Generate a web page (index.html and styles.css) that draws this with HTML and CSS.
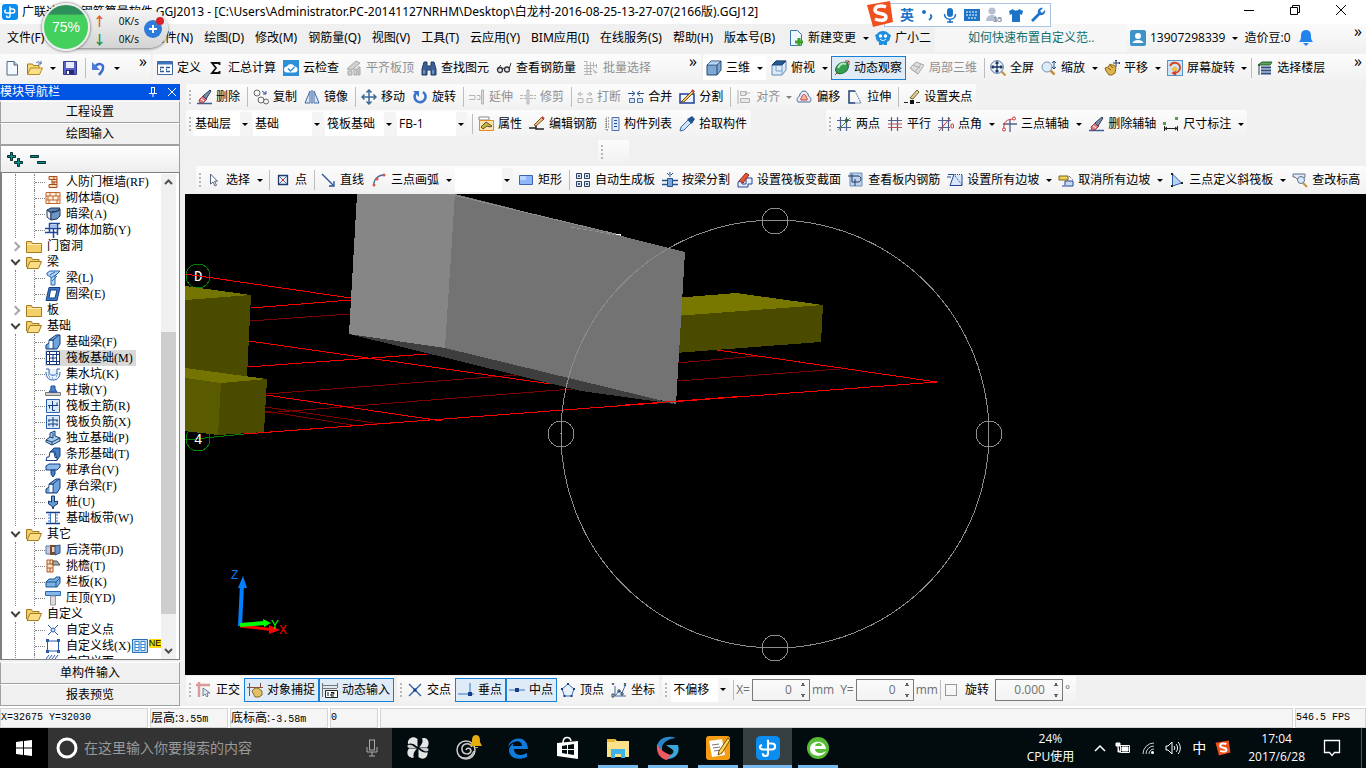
FILE: index.html
```html
<!DOCTYPE html>
<html lang="zh-CN">
<head>
    <meta charset="UTF-8">
    <meta name="viewport" content="width=device-width, initial-scale=1.0">
    <title>GGJ2013</title>
    <link rel="stylesheet" href="styles.css">
</head>
<body>
<svg class="defs" aria-hidden="true">
    <!-- app + files -->
    <symbol id="app" viewBox="0 0 16 16"><rect width="16" height="16" rx="3" fill="#0b8df0"/><path d="M8 2.500v9c0 2.500-3.500 2.500-3.500 0M8 5h2.500c3 0 3 4 0 4H5C2 9 2 6.500 4 6" fill="none" stroke="#fff" stroke-width="1.400"/></symbol>
    <symbol id="new" viewBox="0 0 16 16"><path d="M3 1.500h7l3.500 3.500v10H3z" fill="#f4f9ff" stroke="#4a6684"/><path d="M10 1.500V5h3.500" fill="#b8cbe0" stroke="#4a6684"/></symbol>
    <symbol id="open" viewBox="0 0 16 16"><path d="M.5 14V4h5l1 1.500H12V8" fill="#f7d978" stroke="#a67a1a"/><path d="M.5 14.500L3.500 8H15.500l-3 6.500z" fill="#fbe08b" stroke="#b58a24"/><path d="M9 3c2-2 4-1 5 1m0-3v3h-3" fill="none" stroke="#3e6a9c"/></symbol>
    <symbol id="save" viewBox="0 0 16 16"><path d="M1.500 1.500h13v13h-13z" fill="#5660c8" stroke="#343a90"/><path d="M4 2h8v6H4z" fill="#e9edfb"/><path d="M4 10h8v4H4z" fill="#22286c"/><path d="M5 11h2v3H5z" fill="#fff"/></symbol>
    <symbol id="undo" viewBox="0 0 16 16"><path d="M4 7c3-5 9-3 8 1 0 3-2 4-4 7" fill="none" stroke="#3a6cc8" stroke-width="2.500"/><path d="M1 2v8h8z" fill="#4a7cd8"/></symbol>
    <symbol id="define" viewBox="0 0 16 16"><path d="M.5 1.500h15v13H.5z" fill="#fff" stroke="#3b6aa5"/><path d="M1 2h14v2.500H1z" fill="#3f74b8"/><path d="M3 7.500h4m-4 4h4m2-4h4m-4 4h4M3 9.500h1m5 0h1" stroke="#30598f" stroke-width="1.500"/></symbol>
    <symbol id="sigma" viewBox="0 0 16 16"><path d="M11.500 5V3H4l4 5-4 5h7.500v-2" fill="none" stroke="#111" stroke-width="1.800"/></symbol>
    <symbol id="cloud" viewBox="0 0 16 16"><rect width="16" height="16" fill="#2d8fd8"/><path d="M4 12.500a3 3 0 010-6 4 4 0 017.500 0 3 3 0 010 6z" fill="#fff"/><path d="M5 8.500l2.500 2.500 4-4" fill="none" stroke="#2d8fd8" stroke-width="1.500"/></symbol>
    <symbol id="level" viewBox="0 0 16 16"><path d="M1 9l9-8 4 2-8 7zM2 11h4v4H2zm6-2h3v6H8zm4-2h2v8h-2z" fill="#d0d0d0" stroke="#a8a8a8"/></symbol>
    <symbol id="find" viewBox="0 0 16 16"><path d="M3 2h3v4h4V2h3l2 7v6h-5v-5H6v5H1V9z" fill="#3a5f94" stroke="#203c66"/><path d="M3 10v4m9-4v4" stroke="#9fc0e8"/></symbol>
    <symbol id="glasses" viewBox="0 0 16 16"><circle cx="4" cy="10" r="2.500" fill="#dfe6ee" stroke="#333" stroke-width="1.300"/><circle cx="11" cy="9.500" r="2.500" fill="#dfe6ee" stroke="#333" stroke-width="1.300"/><path d="M6 9l2-1M1 10l4-5m8 4l2-6" stroke="#333" fill="none"/></symbol>
    <symbol id="batch" viewBox="0 0 16 16"><path d="M1 1.500h3v13M1 5.500h12M1 8.500h8M1 11.500h8M1 14.500h8M7.500 2v13m3-13v6m3-4v4" stroke="#b4b4b4" fill="none"/><path d="M9 8l6 5-3 0 1 3z" fill="#bbb"/></symbol>
    <symbol id="cube" viewBox="0 0 16 16"><path d="M1 5l4-4h10v9l-4 5H1z" fill="#7fa7d4" stroke="#274a75"/><path d="M1 5h10v10m0-10l4-4" fill="none" stroke="#274a75"/><path d="M1.500 4.500L5 1.500h9l-3 3z" fill="#b9d4f1"/></symbol>
    <symbol id="topview" viewBox="0 0 16 16"><path d="M1 5l4-4h10v9l-4 5H1z" fill="#dbe9f8" stroke="#6288b2"/><path d="M1 5l4-4h10l-4 4z" fill="#245a94" stroke="#1a426f"/><path d="M11 5v10M5 5v6h6" fill="none" stroke="#7ca3cb"/></symbol>
    <symbol id="orbit" viewBox="0 0 16 16"><path d="M1 15L15 1M11 1h4v4" stroke="#a0402c" fill="none"/><ellipse cx="8" cy="8" rx="7" ry="5" transform="rotate(-35 8 8)" fill="#35a04e" stroke="#1f6637"/><path d="M4 8c2-4 5-5 8-4" stroke="#b6ecc1" stroke-width="2" fill="none"/></symbol>
    <symbol id="partial" viewBox="0 0 16 16"><path d="M1 8l6-6 8 3-6 9z" fill="#ddd" stroke="#aaa"/><path d="M4 5l7 3m-5 4l6-8M1 8l8 6" stroke="#aaa" fill="none"/></symbol>
    <symbol id="full" viewBox="0 0 16 16"><circle cx="7" cy="7" r="6.300" fill="#edf4fc" stroke="#4c6f9c"/><path d="M7 2v10M2 7h10M5.500 3.500L7 2l1.500 1.500m-3 7L7 12l1.500-1.500M3.500 5.500L2 7l1.500 1.500m7-3L12 7l-1.500 1.500" stroke="#1b355c" stroke-width="1.300" fill="none"/><path d="M11.500 11.500l4 4" stroke="#c49339" stroke-width="2"/></symbol>
    <symbol id="zoom" viewBox="0 0 16 16"><circle cx="6" cy="7" r="5" fill="#dcebfa" stroke="#7a92b0"/><path d="M9.500 10.500l4 4" stroke="#c49339" stroke-width="2.500"/><path d="M13 1v8m-2-6l2-2 2 2m-4 4l2 2 2-2" stroke="#23477b" fill="none"/></symbol>
    <symbol id="pan" viewBox="0 0 16 16"><path d="M1 8l3-1 2-3 2 1 2 0 2 3-1 5-3 2H5l-3-4z" fill="#dfb44d" stroke="#8b6a20"/><path d="M4 8l3 2m-1-5l3 3" stroke="#8b6a20"/><path d="M12 0v7m-3-4h7m-5-2l1-1 1 1m2 1l1 1-1 1" stroke="#233f6c" fill="none"/></symbol>
    <symbol id="rotscreen" viewBox="0 0 16 16"><rect x=".5" y=".5" width="15" height="15" fill="#cfe4f7" stroke="#5b93c5"/><path d="M3 6c2-5 10-4 10 2 0 3-3 5-6 5M9 10l-3 3 3 2" stroke="#d9401f" stroke-width="1.800" fill="none"/><path d="M4 9l4-3 3 3-4 3z" fill="#f2c14c"/></symbol>
    <symbol id="floor" viewBox="0 0 16 16"><path d="M1 5l4-3h10l-2 3z" fill="#5aa35a" stroke="#26602c"/><path d="M4 7.500h10M4 10.500h10M4 13.500h10" stroke="#2c4f86" stroke-width="2"/><path d="M2 6v9M1 6l1-1 1 1" stroke="#345" fill="none"/></symbol>
    <!-- edit row -->
    <symbol id="erase" viewBox="0 0 16 16"><path d="M1 14.500h15" stroke="#3a5f96" stroke-width="1.500"/><path d="M3 11l4-4 4 3-4 4H4z" fill="#e27878" stroke="#8e4256"/><path d="M7 7l7-6 1 1-5 8z" fill="#7b8ea9" stroke="#2d3f5e"/><path d="M5 10l3 2" stroke="#fff"/></symbol>
    <symbol id="copy" viewBox="0 0 16 16"><circle cx="4" cy="4" r="3" fill="none" stroke="#666"/><circle cx="8" cy="11" r="3" fill="none" stroke="#666"/><circle cx="13" cy="12.500" r="2.500" fill="none" stroke="#666"/><path d="M9 2l4 3m0-3v3h-3" stroke="#244f93" fill="none"/></symbol>
    <symbol id="mirror" viewBox="0 0 16 16"><path d="M6 2v12H1zM10 2v12h5z" fill="#dce9fa" stroke="#3a66a8"/><path d="M8 1v14" stroke="#24508f"/></symbol>
    <symbol id="move" viewBox="0 0 16 16"><path d="M8 1v14M1 8h14M5.500 3.500L8 1l2.500 2.500m-5 9L8 15l2.500-2.500M3.500 5.500L1 8l2.500 2.500m9-5L15 8l-2.500 2.500" stroke="#3c6b96" stroke-width="1.500" fill="none"/></symbol>
    <symbol id="rotate" viewBox="0 0 16 16"><path d="M4 4a5.500 5.500 0 107-1" stroke="#3a74cc" stroke-width="2.600" fill="none"/><path d="M1 2h6v6z" fill="#3a74cc"/></symbol>
    <symbol id="extend" viewBox="0 0 16 16"><path d="M0 6.500h6v4H0M8 6.500h3v4H8" fill="none" stroke="#b5b5b5"/><path d="M12.500 1v14h2V1z" fill="#ddd" stroke="#b5b5b5"/></symbol>
    <symbol id="trim" viewBox="0 0 16 16"><path d="M0 6.500h6v3H0m10-3h6m-6 3h6" fill="none" stroke="#b5b5b5" stroke-dasharray="3 1"/><path d="M7 1v14h2V1z" fill="#ddd" stroke="#b5b5b5"/></symbol>
    <symbol id="break" viewBox="0 0 16 16"><path d="M1 9.500h5v4H1zM10 9.500h5v4h-5zM1 5h5M4 3L1 5l3 2m6-2h5m-3-2l3 2-3 2" fill="none" stroke="#b5b5b5"/></symbol>
    <symbol id="merge" viewBox="0 0 16 16"><path d="M1.500 9.500h5v4h-5zm8 0h5v4h-5z" fill="#dbe7f6" stroke="#4a6f9f"/><path d="M0 4.500h6m10 0h-6M4 2l3 2.500L4 7m8-5L9 4.500 12 7" fill="none" stroke="#244f93"/></symbol>
    <symbol id="split" viewBox="0 0 16 16"><path d="M1 5h14v9H1z" fill="#eef4fd" stroke="#1d3f96" stroke-width="1.500"/><path d="M2 13L14 1l1 2L5 13z" fill="#f0cf62" stroke="#7a4a20"/><path d="M13 1l2 2" stroke="#c33" stroke-width="2"/></symbol>
    <symbol id="align" viewBox="0 0 16 16"><path d="M2 1v14M4.500 2.500h5v4h-5zm0 7h9v4h-9z" fill="#e8e8e8" stroke="#b0b0b0"/><path d="M14 4H9m2-2L9 4l2 2" fill="none" stroke="#b0b0b0"/></symbol>
    <symbol id="offset" viewBox="0 0 16 16"><path d="M2 13c-3-4 2-5 2-8 2-4 6-4 8 0 0 3 5 4 2 8z" fill="#e3edf9" stroke="#4b6c97"/><path d="M5 11c-1-2 1-2 1-4 1-2 3-2 4 0 0 2 2 2 1 4z" fill="#f5b3a8" stroke="#c8433a"/></symbol>
    <symbol id="stretch" viewBox="0 0 16 16"><path d="M8 2H2v12h6" fill="none" stroke="#1d3f76" stroke-width="1.500"/><path d="M8 2l6 12H8" fill="none" stroke="#1d3f76" stroke-dasharray="1 1"/></symbol>
    <symbol id="grip" viewBox="0 0 16 16"><path d="M0 13.500h4m8 0h4" stroke="#222"/><path d="M6 11h4v4H6z" fill="#111"/><path d="M6 9L13 1l2 2-6 7z" fill="#e0cc8c" stroke="#76653a"/></symbol>
    <!-- component row -->
    <symbol id="props" viewBox="0 0 16 16"><path d="M1 1h10v3H1z" fill="#fff" stroke="#888"/><path d="M1.500 4.500h14v10h-14z" fill="#ffe3b8" stroke="#e58a1f"/><path d="M3 11l5-5 6 4-2 1-3-1-4 3z" fill="#c8b54a" stroke="#5d531c"/></symbol>
    <symbol id="editbar" viewBox="0 0 16 16"><path d="M0 12h7m0-3v4h8" stroke="#222" fill="none" stroke-width="1.500"/><path d="M5 9l8-8 2 2-8 7z" fill="#e4be7d" stroke="#84562a"/><path d="M13 1l2 2" stroke="#c33" stroke-width="2"/></symbol>
    <symbol id="list" viewBox="0 0 16 16"><path d="M8 1.500h7v13H8z" fill="#dce9fa" stroke="#4c74a8"/><path d="M10 4.500h3m-3 3h3m-3 3h3" stroke="#244f93"/><path d="M5 2H2v12h3M2 5h3M2 8h3M2 11h3" fill="none" stroke="#555" stroke-dasharray="1 1"/></symbol>
    <symbol id="pick" viewBox="0 0 16 16"><path d="M1 15l1-4 7-7 3 3-7 7z" fill="#cfe3f8" stroke="#3a6ca8"/><path d="M8 3l2-1 3-2 3 3-2 3-1 2z" fill="#21558f"/></symbol>
    <symbol id="twopt" viewBox="0 0 16 16"><path d="M4.500 1v14m6-14v14M1 4.500h14M1 11.500h14" stroke="#51608e" stroke-width="1.200"/><path d="M2 14L14 2" stroke="#3c9c48"/><circle cx="10.500" cy="4.500" r="1.800" fill="#2c6a32"/></symbol>
    <symbol id="parallel" viewBox="0 0 16 16"><path d="M4.500 1v14m6-14v14M1 4.500h14" stroke="#51608e" stroke-width="1.200"/><path d="M1 8h14M1 11.500h14" stroke="#b4525e"/></symbol>
    <symbol id="ptangle" viewBox="0 0 16 16"><path d="M4.500 1v14m6-14v14M0 4.500h13M0 11.500h12" stroke="#51608e" stroke-width="1.200"/><path d="M1 15L12 2" stroke="#c33"/><rect x="13" y="8" width="2.500" height="4" rx="1" fill="none" stroke="#c33"/></symbol>
    <symbol id="threept" viewBox="0 0 16 16"><path d="M9 3v13M2 8h14" stroke="#51608e" stroke-width="1.300"/><path d="M3 13C2 6 6 3 13 3" fill="none" stroke="#c33"/><circle cx="13" cy="2.500" r="1.500" fill="#fff" stroke="#c33"/><circle cx="3" cy="13.500" r="1.500" fill="#fff" stroke="#c33"/></symbol>
    <symbol id="dim" viewBox="0 0 16 16"><path d="M1.500 10v5m13-5v5m-13-2.500h13M4 11l-2 1.500L4 14m8-3l2 1.500-2 1.500" fill="none" stroke="#222"/><path d="M0 6h3v3H0zM12 1h3v3h-3z" fill="#4fa04f"/></symbol>
    <!-- draw row -->
    <symbol id="arrow" viewBox="0 0 16 16"><path d="M4.500 2v10l2.500-2 2 4 1.500-.8-2-4h3z" fill="#fff" stroke="#54657d"/></symbol>
    <symbol id="point" viewBox="0 0 16 16"><path d="M3.500 3.500h9v9h-9z" fill="#e8effa" stroke="#243c6c" stroke-width="1.300"/><path d="M4 4l8 8m0-8l-8 8" stroke="#4a6ca8"/><path d="M7 7h2v2H7z" fill="#d22"/></symbol>
    <symbol id="line" viewBox="0 0 16 16"><path d="M2 2l11 11" stroke="#244f93" stroke-width="1.300"/><path d="M14 9v5H9" fill="none" stroke="#244f93" stroke-width="1.300"/></symbol>
    <symbol id="arc" viewBox="0 0 16 16"><path d="M3 14C2 8 7 3 13 3" fill="none" stroke="#3f6c9c" stroke-width="1.300"/><circle cx="13" cy="3" r="1.500" fill="#d05a42"/><circle cx="6" cy="7" r="1.500" fill="#d05a42"/><circle cx="3" cy="13" r="1.500" fill="#d05a42"/></symbol>
    <symbol id="rect" viewBox="0 0 16 16"><path d="M1.500 3.500h13v9h-13z" fill="#8fb6fa" stroke="#3c64b4"/><path d="M2 4h6v4H2z" fill="#bcd4ff"/></symbol>
    <symbol id="auto" viewBox="0 0 16 16"><path d="M1.500 1.500h5v5h-5zm8 0h5v5h-5zm-8 8h5v5h-5zm8 0h5v5h-5z" fill="#dde6f3" stroke="#2e3f5c"/><path d="M3 3h2v2H3zm8 0h2v2h-2zm-8 8h2v2H3zm8 0h2v2h-2z" fill="#3f5f92"/></symbol>
    <symbol id="beamsplit" viewBox="0 0 16 16"><path d="M0 8.500h16M0 12.500h16" stroke="#24508f" stroke-width="1.300"/><path d="M5.500 6.500h5v8h-5z" fill="#79a7dd" stroke="#24508f"/><path d="M8 0v5M5 1l2 2m4-2L9 3" stroke="#24508f"/></symbol>
    <symbol id="section" viewBox="0 0 16 16"><path d="M1 15V10l4-3v5h4V6h6v6h-4v3z" fill="#e7f0fb" stroke="#24449a"/><path d="M2 9l7-8 3 2-6 8z" fill="#e4573d" stroke="#8c2d1c"/></symbol>
    <symbol id="viewbar" viewBox="0 0 16 16"><path d="M2 1h12v13H2z" fill="#bdd1ea" stroke="#6d8fba"/><path d="M0 4h10c4 0 4 6 0 6H4V2m3 12V7" fill="none" stroke="#1e3b6a"/></symbol>
    <symbol id="slope" viewBox="0 0 16 16"><path d="M1 2.500h6L3 13.500h12V3" fill="#d8e6f8" stroke="#24449a"/><path d="M7 2.500L15 13M8 2.500h7" stroke="#24449a" fill="none" stroke-dasharray="1 1"/><path d="M0 5h4" stroke="#24449a"/></symbol>
    <symbol id="unslope" viewBox="0 0 16 16"><path d="M7 13V9h8v5H4" fill="#c9dcf5" stroke="#24449a"/><path d="M1 4h9v4H1z" fill="#f0d05a" stroke="#7d6619"/><path d="M11 4l4 4" stroke="#24449a" stroke-dasharray="1 1"/></symbol>
    <symbol id="tri" viewBox="0 0 16 16"><path d="M3.500 2l9 9-9 3z" fill="#bcd4f2" stroke="#2c5ca5"/><path d="M2 1h2v2H2zm0 12h2v2H2zM12 10h2v2h-2z" fill="#222"/></symbol>
    <symbol id="checkelev" viewBox="0 0 16 16"><path d="M1 2h12v3L8 10 3 5H1z" fill="#e3ebf5" stroke="#5b728f"/><circle cx="9" cy="8" r="3.500" fill="#dbeafa" stroke="#5b728f"/><path d="M11 11l4 4" stroke="#c49339" stroke-width="2"/></symbol>
    <!-- snap row -->
    <symbol id="ortho" viewBox="0 0 16 16"><path d="M0 3h14M3 0v15" stroke="#dc9a9a" stroke-width="2.500"/><path d="M7 6v8l2-2 2 3 1-1-1-3h3z" fill="#dce7f2" stroke="#6b8096"/></symbol>
    <symbol id="osnap" viewBox="0 0 16 16"><path d="M0 5.500h16M2.500 1v13m11-13v5" stroke="#8a4b3f"/><path d="M5 9l3-3h3l4 3v4l-3 2H8z" fill="#e3bf66" stroke="#8b6a20"/></symbol>
    <symbol id="dyn" viewBox="0 0 16 16"><path d="M.5 1v14M15.500 1v5M1 3.500h14M1 6.500h14" stroke="#777" fill="none"/><path d="M3.500 8.500h12v7h-12z" fill="#fff" stroke="#222"/><path d="M6 10v4m3-3.500h3v1.500H9v2h3" stroke="#111" fill="none"/></symbol>
    <symbol id="cross" viewBox="0 0 16 16"><path d="M2 2l12 12M14 2L2 14" stroke="#2a5caa" stroke-width="1.300"/><path d="M6.500 6.500h3v3h-3z" fill="#143f86"/></symbol>
    <symbol id="perp" viewBox="0 0 16 16"><path d="M0 12h16M12 1v11" stroke="#6d9ad4" stroke-width="1.500"/><path d="M10 10h4v4h-4z" fill="#143f86"/></symbol>
    <symbol id="mid" viewBox="0 0 16 16"><path d="M0 8h16" stroke="#6d9ad4" stroke-width="1.500"/><path d="M6 6h4v4H6z" fill="#143f86"/></symbol>
    <symbol id="vertex" viewBox="0 0 16 16"><path d="M8 2l6 5-2.500 7h-7L2 7z" fill="#e8f0fb" stroke="#3a6cb0"/><path d="M7 1h2v2H7zM1 6h2v2H1zm12 0h2v2h-2zM3.500 13h2v2h-2zm7 0h2v2h-2z" fill="#143f86"/></symbol>
    <symbol id="coord" viewBox="0 0 16 16"><path d="M4 4v10h11M4 14l4-5 3 2 3-7" fill="none" stroke="#3a6cb0"/><path d="M1 1l1 2 1-2m10 0l2 3m0-3l-2 3M1 12h2v3H1zM7 8h2v2H7zm3 3h2v2h-2z" fill="none" stroke="#345"/></symbol>
    <!-- tree -->
    <symbol id="folder" viewBox="0 0 16 16"><path d="M.5 3.500h5l1 2h9v9H.5z" fill="#f3cf68" stroke="#a57a20"/><path d="M1 6.500h14" stroke="#fff0b8"/></symbol>
    <symbol id="folder-open" viewBox="0 0 16 16"><path d="M.5 13V3.500h5l1 2H13V8" fill="#f3cf68" stroke="#a57a20"/><path d="M1 14.500L4 7.500h11.500l-3 7z" fill="#fbdd84" stroke="#a57a20"/></symbol>
    <symbol id="t-frame" viewBox="0 0 16 16"><path d="M4 2.500h8v11H4v-3h3v-5H4z" fill="#f8dcc0" stroke="#a84d18"/><path d="M7 5.500h5M7 8h5m-5 2.500h5m-3-8v3m0 2v3" stroke="#a84d18"/></symbol>
    <symbol id="t-brick" viewBox="0 0 16 16"><path d="M1 2.500h14v11H1z" fill="#fff3e6" stroke="#c2662a"/><path d="M1 6h14M1 10h14M5 2v4m6-4v4M8 6v4m-4 0v4m8-4v4M3 6v4m10-4v4" stroke="#c2662a"/></symbol>
    <symbol id="t-box" viewBox="0 0 16 16"><path d="M2 4l4-2h9l-2 3-8 1z" fill="#5d82b4" stroke="#1d355c"/><path d="M2 4l4 3v7l-4-3z" fill="#e9f1fa" stroke="#1d355c"/><path d="M6 7l7-2 2-2v7l-3 3-6 1z" fill="#7096c6" stroke="#1d355c"/></symbol>
    <symbol id="t-rebar" viewBox="0 0 16 16"><path d="M4 1.500h11M4.500 1v10M0 6.500h16M0 10.500h13M8.500 4v12M12.500 1v12" stroke="#1f4796" stroke-width="1.500" fill="none"/><path d="M5 3h7v3H5z" fill="#9dbdec"/></symbol>
    <symbol id="t-beam" viewBox="0 0 16 16"><path d="M2 3l3-2h10l-3 3-2 2v9H6V7L2 5z" fill="#b7d4f4" stroke="#2668b5"/><path d="M5 5l5-3M6 8l6-4M7 11l5-5" stroke="#2668b5"/></symbol>
    <symbol id="t-ring" viewBox="0 0 16 16"><path d="M4 1.500h11L12 14.500H1z" fill="#3f79c4" stroke="#123e86"/><path d="M5.500 4H12l-2 8H4z" fill="#fff" stroke="#123e86"/></symbol>
    <symbol id="t-found" viewBox="0 0 16 16"><path d="M1 15v-4l3-2V6l7-5h4v9l-3 5z" fill="#6fa4df" stroke="#163c78"/><path d="M4 6h4v9M8 6l6-5" stroke="#163c78" fill="none"/><path d="M4.500 7h3v7h-3z" fill="#fff"/></symbol>
    <symbol id="t-raft" viewBox="0 0 16 16"><path d="M1.500 1.500h13v13h-13z" fill="#fff" stroke="#12377a"/><path d="M4.500 1v14m7-14v14M1 4.500h14M1 11.500h14M8 4v8M4 8h8" stroke="#12377a"/></symbol>
    <symbol id="t-sump" viewBox="0 0 16 16"><path d="M1 3h3v4c1 3 7 3 8 0V3h3M1 6c0 5 2 8 7 8s7-3 7-8" fill="#e9f1fb" stroke="#2a62b5"/><path d="M3 9h1m0 2h1m2 1h1m3-2h1m0-2h1" stroke="#2a62b5"/></symbol>
    <symbol id="t-pier" viewBox="0 0 16 16"><path d="M.5 10.500h15v3H.5z" fill="#d0d0d0" stroke="#777"/><path d="M4 10l2-3V4h4v3l2 3z" fill="#4c84cf" stroke="#1d4d93"/></symbol>
    <symbol id="t-main" viewBox="0 0 16 16"><path d="M1.500 1.500h13v13h-13z" fill="#dce9fb" stroke="#2a62b5"/><path d="M7.500 3v9.500H10M3 7.500h10M4.500 7.500v3m7.500-3v-3" stroke="#143f86" fill="none"/></symbol>
    <symbol id="t-neg" viewBox="0 0 16 16"><path d="M1.500 1.500h13v13h-13z" fill="#dce9fb" stroke="#2a62b5"/><path d="M8 3v10M3 6h10M3 10h10M4 6v2m8-2v2m-8 2v2m8-2v2" stroke="#143f86" fill="none"/></symbol>
    <symbol id="t-iso" viewBox="0 0 16 16"><path d="M1 10l4-3V3l5-2v5l5 2v3l-8 4-6-3z" fill="#a9cbee" stroke="#143f74"/><path d="M1 10l6 2 8-4M7 12v3M5 7l3 1V3" stroke="#143f74" fill="none"/></symbol>
    <symbol id="t-strip" viewBox="0 0 16 16"><path d="M5 6l4-4h6v8l-3 4-2-8z" fill="#4680c4" stroke="#143f86"/><path d="M1 14.500h11v-3h-2L9 6H5l-1 5H2z" fill="#fff" stroke="#143f86"/></symbol>
    <symbol id="t-cap" viewBox="0 0 16 16"><path d="M1 4l3-2h11v3l-3 3H1z" fill="#8db8ea" stroke="#143f86"/><path d="M6 8h4v4l-2 3-2-3z" fill="#4680c4" stroke="#143f86"/></symbol>
    <symbol id="t-pile" viewBox="0 0 16 16"><path d="M6.500 2h3v6l3-1v3L9 12l-1 3-1-3-3.500-2V7l3 1z" fill="#6a9bd6" stroke="#143f74"/></symbol>
    <symbol id="t-band" viewBox="0 0 16 16"><path d="M1 2.500h14M1 13.500h14" stroke="#143f86" stroke-width="1.500"/><path d="M5.500 3v10m5-10v10M3 5h2m-2 3h2m-2 3h2m6-6h2m-2 3h2m-2 3h2" stroke="#3a74c4"/></symbol>
    <symbol id="t-post" viewBox="0 0 16 16"><path d="M1 4h5v8H1z" fill="#b9cdea" stroke="#5d7ba6"/><path d="M5 3h6v10H5z" fill="#7a4a2c"/><path d="M7 5h3v5H7z" fill="#f1d5b6"/><path d="M10 4l5-1v8l-5 2z" fill="#6b93cc" stroke="#2c538e"/></symbol>
    <symbol id="t-eave" viewBox="0 0 16 16"><path d="M2 2h6v12H2z" fill="#fbe3cc" stroke="#b5541c"/><path d="M2 6h6M2 10h6M5 2v4m0 4v4" stroke="#b5541c"/><path d="M8 3h4l3 4H8z" fill="#aaa" stroke="#555"/></symbol>
    <symbol id="t-rail" viewBox="0 0 16 16"><path d="M1 8l3-3h6l1-2h4v6l-3 4H1z" fill="#7db0e2" stroke="#1b5592"/><path d="M1 8h10l4-4M11 8v5" stroke="#1b5592" fill="none"/></symbol>
    <symbol id="t-top" viewBox="0 0 16 16"><path d="M.5 1.500h15v4H.5z" fill="#84b7ea" stroke="#276db3"/><path d="M5.500 6h5v9h-5z" fill="#ddd" stroke="#999"/></symbol>
    <symbol id="t-x" viewBox="0 0 16 16"><path d="M3 3l10 10M13 3L3 13" stroke="#2a5caa"/><circle cx="8" cy="8" r="2" fill="#cfe0f8" stroke="#2a5caa"/></symbol>
    <symbol id="t-poly" viewBox="0 0 16 16"><path d="M2.500 3h11v10h-11z" fill="#fff" stroke="#2a5caa"/><path d="M1 1h3v3H1zm11 0h3v3h-3zM1 12h3v3H1zm11 0h3v3h-3z" fill="#2a5caa"/></symbol>
    <symbol id="t-hatch" viewBox="0 0 16 16"><path d="M1 5l3-4m0 4l3-4m0 4l3-4m0 4l3-4" stroke="#2a5caa"/></symbol>
    <symbol id="sogou" viewBox="0 0 28 26"><path d="M1 4L24 0l3 21-20 5z" fill="#f0501e"/><path d="M20 6c-5-2-11-1-11 3 0 5 11 2 11 7 0 4-6 4-11 2" fill="none" stroke="#fff" stroke-width="3.500"/></symbol>
</svg>

<header class="titlebar">
    <svg class="ic"><use href="#app"/></svg>
    <span class="title">广联达BIM钢筋算量软件 GGJ2013 - [C:\Users\Administrator.PC-20141127NRHM\Desktop\白龙村-2016-08-25-13-27-07(2166版).GGJ12]</span>
    <div class="winbtns">
        <button aria-label="最小化"><svg width="12" height="12"><path d="M1 6.500h10" stroke="#000"/></svg></button>
        <button aria-label="还原"><svg width="12" height="12"><path d="M1.500 3.500h7v7h-7zM3.500 3V1.500h7v7H9" fill="none" stroke="#000"/></svg></button>
        <button aria-label="关闭"><svg width="12" height="12"><path d="M1 1l10 10M11 1L1 11" stroke="#000"/></svg></button>
    </div>
</header>

<nav class="menubar">
    <div class="menus">
        <a href="#">文件(F)</a><a href="#">编辑(E)</a><a href="#">楼层(L)</a><a href="#">构件(N)</a><a href="#">绘图(D)</a><a href="#">修改(M)</a><a href="#">钢筋量(Q)</a><a href="#">视图(V)</a><a href="#">工具(T)</a><a href="#">云应用(Y)</a><a href="#">BIM应用(I)</a><a href="#">在线服务(S)</a><a href="#">帮助(H)</a><a href="#">版本号(B)</a>
    </div>
    <button class="tb"><svg class="ic" viewBox="0 0 16 16"><path d="M2.500.5h7l4 4v11h-11z" fill="#eef6ff" stroke="#3f76b0"/><path d="M11 8v8M7 12h8" stroke="#3fa02c" stroke-width="3"/></svg>新建变更</button><i class="caret"></i>
    <button class="tb"><svg class="ic" viewBox="0 0 16 16"><path d="M0 5l2-1c2-4 10-4 12 0l2 1-1 3c0 2-1 3-3 4v3h-3l-1-1-1 1H4v-3C2 11 1 10 1 8z" fill="#1d8fe0"/><circle cx="5.500" cy="6" r="1.700" fill="#fff"/><circle cx="10.500" cy="6" r="1.700" fill="#fff"/><path d="M5 9c2 2 4 2 6 0" stroke="#fff" fill="none"/></svg>广小二</button>
    <a href="#" class="tip">如何快速布置自定义范..</a>
    <div class="account">
        <button class="tb"><svg class="ic" viewBox="0 0 16 16"><rect width="16" height="16" rx="2" fill="#3f93c8"/><circle cx="8" cy="6" r="3" fill="#fff"/><path d="M2.500 13c1-4 10-4 11 0z" fill="#fff"/></svg>13907298339</button><i class="caret"></i>
        <button class="tb">造价豆:0</button>
        <button class="tb" aria-label="消息"><svg class="ic" viewBox="0 0 16 16"><path d="M8 0c5 0 5 4 5 7 0 2 1 4 2 5H1c1-1 2-3 2-5 0-3 0-7 5-7zM5 13h6l-3 3z" fill="#2383ea"/></svg></button>
        <span class="more">»</span>
    </div>
</nav>

<div class="toolbar">
    <div class="seg files">
        <button class="tb" aria-label="新建"><svg class="ic"><use href="#new"/></svg></button>
        <button class="tb" aria-label="打开"><svg class="ic"><use href="#open"/></svg></button><i class="caret"></i>
        <button class="tb" aria-label="保存"><svg class="ic"><use href="#save"/></svg></button><i class="sep"></i>
        <button class="tb" aria-label="撤销"><svg class="ic"><use href="#undo"/></svg></button><i class="caret"></i>
        <span class="more">»</span>
    </div>
    <div class="seg calc">
        <button class="tb"><svg class="ic"><use href="#define"/></svg>定义</button>
        <button class="tb"><svg class="ic"><use href="#sigma"/></svg>汇总计算</button>
        <button class="tb"><svg class="ic"><use href="#cloud"/></svg>云检查</button>
        <button class="tb off"><svg class="ic"><use href="#level"/></svg>平齐板顶</button>
        <button class="tb"><svg class="ic"><use href="#find"/></svg>查找图元</button>
        <button class="tb"><svg class="ic"><use href="#glasses"/></svg>查看钢筋量</button>
        <button class="tb off"><svg class="ic"><use href="#batch"/></svg>批量选择</button>
        <span class="more">»</span>
    </div>
    <div class="seg views">
        <span class="white"><button class="tb"><svg class="ic"><use href="#cube"/></svg>三维</button><i class="caret"></i></span>
        <button class="tb"><svg class="ic"><use href="#topview"/></svg>俯视</button><i class="caret"></i>
        <button class="tb on"><svg class="ic"><use href="#orbit"/></svg>动态观察</button>
        <button class="tb off"><svg class="ic"><use href="#partial"/></svg>局部三维</button><i class="sep"></i>
        <button class="tb"><svg class="ic"><use href="#full"/></svg>全屏</button>
        <button class="tb"><svg class="ic"><use href="#zoom"/></svg>缩放</button><i class="caret"></i>
        <button class="tb"><svg class="ic"><use href="#pan"/></svg>平移</button><i class="caret"></i>
        <button class="tb"><svg class="ic"><use href="#rotscreen"/></svg>屏幕旋转</button><i class="caret tight"></i><i class="sep"></i>
        <button class="tb"><svg class="ic"><use href="#floor"/></svg>选择楼层</button>
        <span class="more">»</span>
    </div>
</div>

<main>
    <aside>
        <div class="navhead"><span>模块导航栏</span>
            <svg width="10" height="10"><path d="M3 .5h4M3.500 1v5M6.500 1v5M1 6.500h8M5 7v3" stroke="#fff" fill="none"/></svg>
            <svg width="10" height="10"><path d="M1 1l8 8M9 1L1 9" stroke="#fff"/></svg>
        </div>
        <button class="navbtn">工程设置</button>
        <button class="navbtn">绘图输入</button>
        <div class="expand">
            <svg width="42" height="20"><path d="M4.500 2.500h2v3h3v2h-3v3h-2v-3h-3v-2h3zM11.500 8.500h2v3h3v2h-3v3h-2v-3h-3v-2h3zM24.500 5.500h8v2h-8zM31.500 11.500h8v2h-8z" fill="#0a9090" stroke="#032f2f"/></svg>
        </div>
        <div class="treebox">
            <ul class="tree">
                <li><ul>
                    <li><svg class="ic"><use href="#t-frame"/></svg>人防门框墙(RF)</li>
                    <li><svg class="ic"><use href="#t-brick"/></svg>砌体墙(Q)</li>
                    <li><svg class="ic"><use href="#t-box"/></svg>暗梁(A)</li>
                    <li><svg class="ic"><use href="#t-rebar"/></svg>砌体加筋(Y)</li>
                </ul></li>
                <li><div class="node shut"><svg class="ic"><use href="#folder"/></svg>门窗洞</div></li>
                <li><div class="node"><svg class="ic"><use href="#folder-open"/></svg>梁</div><ul>
                    <li><svg class="ic"><use href="#t-beam"/></svg>梁(L)</li>
                    <li><svg class="ic"><use href="#t-ring"/></svg>圈梁(E)</li>
                </ul></li>
                <li><div class="node shut"><svg class="ic"><use href="#folder"/></svg>板</div></li>
                <li><div class="node"><svg class="ic"><use href="#folder-open"/></svg>基础</div><ul>
                    <li><svg class="ic"><use href="#t-found"/></svg>基础梁(F)</li>
                    <li class="sel"><svg class="ic"><use href="#t-raft"/></svg><span>筏板基础(M)</span></li>
                    <li><svg class="ic"><use href="#t-sump"/></svg>集水坑(K)</li>
                    <li><svg class="ic"><use href="#t-pier"/></svg>柱墩(Y)</li>
                    <li><svg class="ic"><use href="#t-main"/></svg>筏板主筋(R)</li>
                    <li><svg class="ic"><use href="#t-neg"/></svg>筏板负筋(X)</li>
                    <li><svg class="ic"><use href="#t-iso"/></svg>独立基础(P)</li>
                    <li><svg class="ic"><use href="#t-strip"/></svg>条形基础(T)</li>
                    <li><svg class="ic"><use href="#t-cap"/></svg>桩承台(V)</li>
                    <li><svg class="ic"><use href="#t-found"/></svg>承台梁(F)</li>
                    <li><svg class="ic"><use href="#t-pile"/></svg>桩(U)</li>
                    <li><svg class="ic"><use href="#t-band"/></svg>基础板带(W)</li>
                </ul></li>
                <li><div class="node"><svg class="ic"><use href="#folder-open"/></svg>其它</div><ul>
                    <li><svg class="ic"><use href="#t-post"/></svg>后浇带(JD)</li>
                    <li><svg class="ic"><use href="#t-eave"/></svg>挑檐(T)</li>
                    <li><svg class="ic"><use href="#t-rail"/></svg>栏板(K)</li>
                    <li><svg class="ic"><use href="#t-top"/></svg>压顶(YD)</li>
                </ul></li>
                <li><div class="node"><svg class="ic"><use href="#folder-open"/></svg>自定义</div><ul>
                    <li><svg class="ic"><use href="#t-x"/></svg>自定义点</li>
                    <li><svg class="ic"><use href="#t-poly"/></svg>自定义线(X)<svg class="ic card" viewBox="0 0 16 16"><path d="M.5 1.500h15v13H.5z" fill="#bcdcf8" stroke="#2a6fb5"/><path d="M3 3.500h4v9H3zm6 0h4v9H9zM3 6.500h4m-4 3h4m2-3h4m-4 3h4" fill="#fff" stroke="#3a86cf"/></svg><b class="new">NE</b></li>
                    <li><svg class="ic"><use href="#t-hatch"/></svg>自定义面</li>
                </ul></li>
            </ul>
            <div class="scroll">
                <svg width="15" height="16"><path d="M4 10l3.500-3.500L11 10" fill="none" stroke="#505050" stroke-width="2"/></svg>
                <i class="thumb"></i>
                <svg width="15" height="16"><path d="M4 6l3.500 3.500L11 6" fill="none" stroke="#505050" stroke-width="2"/></svg>
            </div>
        </div>
        <button class="navbtn">单构件输入</button>
        <button class="navbtn">报表预览</button>
    </aside>

    <section class="work">
        <div class="row">
            <div class="seg">
                <i class="dots"></i>
                <button class="tb"><svg class="ic"><use href="#erase"/></svg>删除</button><i class="sep"></i>
                <button class="tb"><svg class="ic"><use href="#copy"/></svg>复制</button>
                <button class="tb"><svg class="ic"><use href="#mirror"/></svg>镜像</button><i class="sep"></i>
                <button class="tb"><svg class="ic"><use href="#move"/></svg>移动</button>
                <button class="tb"><svg class="ic"><use href="#rotate"/></svg>旋转</button><i class="sep"></i>
                <button class="tb off"><svg class="ic"><use href="#extend"/></svg>延伸</button>
                <button class="tb off"><svg class="ic"><use href="#trim"/></svg>修剪</button><i class="sep"></i>
                <button class="tb off"><svg class="ic"><use href="#break"/></svg>打断</button>
                <button class="tb"><svg class="ic"><use href="#merge"/></svg>合并</button>
                <button class="tb"><svg class="ic"><use href="#split"/></svg>分割</button><i class="sep"></i>
                <button class="tb off"><svg class="ic"><use href="#align"/></svg>对齐</button><i class="caret tight dim"></i>
                <button class="tb"><svg class="ic"><use href="#offset"/></svg>偏移</button>
                <button class="tb"><svg class="ic"><use href="#stretch"/></svg>拉伸</button><i class="sep"></i>
                <button class="tb"><svg class="ic"><use href="#grip"/></svg>设置夹点</button>
            </div>
        </div>
        <div class="row">
            <div class="seg">
                <i class="dots"></i>
                <span class="combo short"><select aria-label="楼层"><option>基础层</option></select></span>
                <span class="combo"><select aria-label="类型"><option>基础</option></select></span>
                <span class="combo"><select aria-label="构件类型"><option>筏板基础</option></select></span>
                <span class="combo"><select aria-label="构件"><option>FB-1</option></select></span>
                <i class="sep"></i>
                <button class="tb"><svg class="ic"><use href="#props"/></svg>属性</button>
                <button class="tb"><svg class="ic"><use href="#editbar"/></svg>编辑钢筋</button>
                <button class="tb"><svg class="ic"><use href="#list"/></svg>构件列表</button>
                <button class="tb"><svg class="ic"><use href="#pick"/></svg>拾取构件</button>
            </div>
            <div class="seg axis">
                <i class="dots"></i>
                <button class="tb"><svg class="ic"><use href="#twopt"/></svg>两点</button>
                <button class="tb"><svg class="ic"><use href="#parallel"/></svg>平行</button>
                <button class="tb"><svg class="ic"><use href="#ptangle"/></svg>点角</button><i class="caret"></i>
                <button class="tb"><svg class="ic"><use href="#threept"/></svg>三点辅轴</button><i class="caret"></i>
                <button class="tb"><svg class="ic"><use href="#erase"/></svg>删除辅轴</button>
                <button class="tb"><svg class="ic"><use href="#dim"/></svg>尺寸标注</button><i class="caret"></i>
            </div>
        </div>
        <div class="row">
            <div class="seg stub"><i class="dots"></i></div>
        </div>
        <div class="row">
            <div class="seg draw">
                <i class="dots"></i>
                <button class="tb"><svg class="ic"><use href="#arrow"/></svg>选择</button><i class="caret"></i><i class="sep"></i>
                <button class="tb"><svg class="ic"><use href="#point"/></svg>点</button><i class="sep"></i>
                <button class="tb"><svg class="ic"><use href="#line"/></svg>直线</button>
                <button class="tb"><svg class="ic"><use href="#arc"/></svg>三点画弧</button><i class="caret"></i>
                <span class="combo short"><select aria-label="弧参数"><option></option></select></span>
                <button class="tb"><svg class="ic"><use href="#rect"/></svg>矩形</button><i class="sep"></i>
                <button class="tb"><svg class="ic"><use href="#auto"/></svg>自动生成板</button>
                <button class="tb"><svg class="ic"><use href="#beamsplit"/></svg>按梁分割</button>
                <button class="tb"><svg class="ic"><use href="#section"/></svg>设置筏板变截面</button>
                <button class="tb"><svg class="ic"><use href="#viewbar"/></svg>查看板内钢筋</button>
                <button class="tb"><svg class="ic"><use href="#slope"/></svg>设置所有边坡</button><i class="caret"></i>
                <button class="tb"><svg class="ic"><use href="#unslope"/></svg>取消所有边坡</button><i class="caret"></i>
                <button class="tb"><svg class="ic"><use href="#tri"/></svg>三点定义斜筏板</button><i class="caret"></i>
                <button class="tb"><svg class="ic"><use href="#checkelev"/></svg>查改标高</button>
            </div>
        </div>

        <svg class="view">
            <g shape-rendering="crispEdges" fill="none">
                <path d="M65 127L164 120M81 200L332 181M80 219L387 195M80 213L196 230M80 217L173 232M492 169L572 162M492 187L655 175" stroke="#800000"/>
                <path d="M66 114L166 106M64 147L366 190M62 173L242 160M81 201L257 227M59 240L752 188L532 156" stroke="#f00"/>
                <path d="M0 246L59 240" stroke="#008000"/>
                <circle cx="13" cy="82" r="12" stroke="#008000"/>
                <circle cx="13" cy="245" r="12" stroke="#008000"/>
            </g>
            <text x="9" y="87" class="mark">D</text>
            <text x="9" y="250" class="mark">4</text>
            <g shape-rendering="crispEdges">
                <path d="M0 80L166 104" stroke="#f00"/>
                <path d="M0 92L66 101 0 106z" fill="#747400"/>
                <path d="M0 106L66 101 62 183 0 176z" fill="#4b4b00"/>
                <path d="M0 174L82 185 36 189 0 184z" fill="#747400"/>
                <path d="M0 184L36 189 33 241 0 237z" fill="#5a5a00"/>
                <path d="M36 189L82 185 79 238 33 241z" fill="#4b4b00"/>
                <path d="M490 104L551 99 638 111 490 122z" fill="#787800"/>
                <path d="M490 122L638 111 636 148 490 159z" fill="#4b4b00"/>
                <path d="M164 140L260 153 490 210 396 197z" fill="#3e3e3e"/>
                <path d="M172 0H270L260 154 164 140z" fill="#868686"/>
                <path d="M270 0L500 58 491 210 260 154z" fill="#737373"/>
                <path d="M264 0L435 41" stroke="#8c8c8c"/>
                <path d="M386 33L430 41" stroke="#909090" stroke-dasharray="4 2"/>
                <path d="M431 40h4v2" stroke="#fff" fill="none"/>
                <path d="M440 211L560 202" stroke="#f00"/>
            </g>
            <g fill="none" stroke="#8c8c8c" shape-rendering="crispEdges">
                <circle cx="590" cy="240" r="214"/>
                <circle cx="590" cy="27" r="13"/>
                <circle cx="376" cy="240" r="13"/>
                <circle cx="804" cy="240" r="13"/>
                <circle cx="590" cy="454" r="13"/>
            </g>
            <path d="M55 432L57 390" stroke="#0080ff" stroke-width="4"/>
            <path d="M58 382L62 394H53z" fill="#0080ff"/>
            <path d="M55 432L90 436" stroke="#f00" stroke-width="3"/>
            <path d="M84 431L95 436 84 440z" fill="#f00"/>
            <path d="M55 431L80 429" stroke="#0f0" stroke-width="4"/>
            <path d="M78 425L86 429 79 433z" fill="#0f0"/>
            <text x="46" y="385" class="axis-label" fill="#0080ff">Z</text>
            <text x="86" y="435" class="axis-label" fill="#0f0">Y</text>
            <text x="94" y="440" class="axis-label" fill="#f00">X</text>
        </svg>

        <div class="row snap">
            <div class="seg">
                <i class="dots"></i>
                <button class="tb"><svg class="ic"><use href="#ortho"/></svg>正交</button>
                <button class="tb on"><svg class="ic"><use href="#osnap"/></svg>对象捕捉</button>
                <button class="tb on"><svg class="ic"><use href="#dyn"/></svg>动态输入</button>
            </div>
            <div class="seg">
                <i class="dots"></i>
                <button class="tb"><svg class="ic"><use href="#cross"/></svg>交点</button>
                <button class="tb on"><svg class="ic"><use href="#perp"/></svg>垂点</button>
                <button class="tb on"><svg class="ic"><use href="#mid"/></svg>中点</button>
                <button class="tb"><svg class="ic"><use href="#vertex"/></svg>顶点</button>
                <button class="tb"><svg class="ic"><use href="#coord"/></svg>坐标</button>
            </div>
            <div class="seg offset">
                <i class="dots"></i>
                <span class="combo short"><select aria-label="偏移方式"><option>不偏移</option></select></span>
                <i class="sep"></i>
                <label for="offx">X=</label><span class="spin"><input id="offx" value="0"></span><span>mm</span>
                <label for="offy" class="second">Y=</label><span class="spin"><input id="offy" value="0"></span><span>mm</span>
                <i class="sep"></i>
                <input type="checkbox" id="rot"><label for="rot" class="rot">旋转</label>
                <span class="spin wide"><input aria-label="角度" value="0.000"></span><span>°</span>
            </div>
        </div>
    </section>
</main>

<footer class="status">
    <span class="xy num">X=32675 Y=32030</span>
    <span class="floor">层高:<span class="num">3.55m</span></span>
    <span class="bottom">底标高:<span class="num">-3.58m</span></span>
    <span class="count num">0</span>
    <span class="rest"></span>
    <span class="fps num">546.5 FPS</span>
</footer>

<div class="taskbar">
    <button class="start" aria-label="开始"><svg width="16" height="16"><path d="M0 2l7-1v6.500H0zM8 1l8-1v7.500H8zM0 8.500h7V15l-7-1zM8 8.500h8V16l-8-1z" fill="#fff"/></svg></button>
    <div class="search">
        <svg width="22" height="22"><circle cx="11" cy="11" r="9" fill="none" stroke="#fff" stroke-width="3"/></svg>
        <input type="text" aria-label="搜索" placeholder="在这里输入你要搜索的内容">
        <svg width="12" height="18"><rect x="3.500" y="1" width="5" height="10" fill="none" stroke="#aaa"/><path d="M1 8v5h10V8M6 13v4M3 17h6" fill="none" stroke="#aaa"/></svg>
    </div>
    <div class="apps">
        <button aria-label="应用"><svg width="24" height="24"><path d="M11.500 11V3C7-1 1 3 2 8c2-1 6-1 9.500 3zM13 11.500h8c4-5 0-11-5-9 1 2 1 5-3 9zM12.500 13v8c5 4 10 0 9-5-2 1-5 1-9-3zM11 12.500H3c-4 5 0 10 5 9-1-2-1-5 3-9z" fill="#e4e6e6"/><path d="M2 9c2-1 5 0 8 3H3c-2-1-2-2-1-3zM22 15c-2 1-5 0-8-3h7c2 1 2 2 1 3z" fill="#c9cccc"/></svg></button>
        <button aria-label="消息应用"><svg width="28" height="28"><circle cx="12" cy="16" r="9" fill="none" stroke="#ccc" stroke-width="1.500"/><path d="M18 13c-3-6-11-3-10 3 1 5 8 5 9 1 0-3-4-4-5-1M5 22c6 4 12 2 15-5" fill="none" stroke="#ccc" stroke-width="1.500"/><path d="M22 1c4 0 4 4 4 7l2 4H16l2-4c0-3 0-7 4-7z" fill="#e5ac0e"/><path d="M21 13h3v1h-3z" fill="#e5ac0e"/></svg></button>
        <button aria-label="Edge"><svg width="24" height="24"><path d="M2 11C4 1 21-2 22 13H8c0 7 8 7 13 4v4C12 25 3 22 3 14c0-3 2-5 5-7-1 1-1 2-1 3h9c0-7-10-6-14 1z" fill="#0f7bdc"/></svg></button>
        <button aria-label="商店"><svg width="24" height="24"><path d="M1 7l21-2v18L1 20z" fill="#fff"/><path d="M7 7c0-7 7-7 8-2" fill="none" stroke="#fff" stroke-width="1.500"/><path d="M6 10l5-1v4H6zm6-1l6-1v5h-6zm-6 5h5v4l-5-1zm6 0h6v5l-6-1z" fill="#020b0e"/></svg></button>
        <button aria-label="资源管理器" class="run"><svg width="24" height="24"><path d="M1 3h8l2 2h12v16H1z" fill="#fbe08a"/><path d="M1 3h8v3H1z" fill="#e5b83c"/><path d="M5 13h14v9h-4v-4H9v4H5z" fill="#3db3ea"/></svg></button>
        <button aria-label="G" class="run"><svg width="24" height="24"><path d="M20 2C10-2 1 4 1 11l6 6C3 8 11 3 20 2z" fill="#2a86c8"/><path d="M10 9h12c3 10-5 15-12 14l4-4c3-1 4-3 3-5z" fill="#3aa7db"/><path d="M1 8c-1 9 3 15 10 16l4-5C9 17 4 14 1 8z" fill="#ec5b62"/></svg></button>
        <button aria-label="笔记" class="run"><svg width="24" height="24"><rect width="24" height="24" rx="3" fill="#f59c14"/><path d="M3 5l13-2 3 16-13 2z" fill="#fff"/><path d="M6 9l7-1m-6 4l7-1m-6 4l7-1" stroke="#777"/><path d="M22 2L13 15l-1 4 4-2 8-13z" fill="#f9d95b" stroke="#7e4c07"/></svg></button>
        <button aria-label="GGJ2013" class="run active"><svg width="24" height="24"><use href="#app"/></svg></button>
        <button aria-label="浏览器" class="run"><svg width="24" height="24"><circle cx="12" cy="12" r="11" fill="#56bd34"/><path d="M4 13c0-9 15-10 16 0H9c0 5 7 5 11 2-3 7-16 6-16-2zm5-3h7c0-4-6-4-7 0z" fill="#fff"/></svg></button>
    </div>
    <div class="cpu">24%<br>CPU使用</div>
    <div class="tray">
        <svg width="12" height="16"><path d="M1 11l5-5 5 5" fill="none" stroke="#fff" stroke-width="1.500"/></svg>
        <svg width="16" height="16"><path d="M5.500 5.500h9v7h-9z" fill="none" stroke="#fff"/><path d="M7 7h6v4H7zM1 3h4v3H1zM3 6v6h2" fill="#fff" stroke="#fff"/></svg>
        <svg width="16" height="16"><path d="M3 14A11 11 0 0114 3M6 14a8 8 0 018-8M9 14a5 5 0 015-5" fill="none" stroke="#ccc"/><circle cx="12.500" cy="12.500" r="1.500" fill="#fff"/></svg>
        <svg width="18" height="16"><path d="M1 6h2l4-4v12l-4-4H1zM9 6c1 1 1 3 0 4m2-6c2 2 2 6 0 8m2-10c3 3 3 9 0 12" fill="none" stroke="#fff"/></svg>
        <span class="ime">中</span>
        <svg width="16" height="16"><use href="#sogou"/></svg>
    </div>
    <div class="clock">17:04<br>2017/6/28</div>
    <button class="notice" aria-label="通知"><svg width="18" height="18"><path d="M1.500 1.500h15v12h-5L9 16.500 6.500 13.500h-5z" fill="none" stroke="#fff" stroke-width="1.300"/></svg></button>
</div>

<!-- desktop speed ball over the window -->
<div class="ball">
    <div class="pill">
        <span class="up">↑</span><span>0K/s</span>
        <span class="down">↓</span><span>0K/s</span>
    </div>
    <div class="circle">75%</div>
    <svg class="plus" width="22" height="22"><circle cx="10" cy="12" r="9" fill="#2f7bd9"/><path d="M10 8v8M6 12h8" stroke="#fff" stroke-width="2"/><circle cx="17" cy="4" r="4" fill="#d8232a"/></svg>
</div>

<!-- input method bar -->
<div class="imebar">
    <svg class="logo" width="28" height="26"><use href="#sogou"/></svg>
    <b>英</b>
    <svg width="16" height="16"><circle cx="4" cy="5" r="2" fill="#1b74c8"/><path d="M10 8c2 0 2 3-1 5" stroke="#1b74c8" stroke-width="2" fill="none"/></svg>
    <svg width="16" height="16"><rect x="5" y="1" width="6" height="9" rx="3" fill="#1b74c8"/><path d="M2.500 7c0 7 11 7 11 0M8 12v4M5 15h6" fill="none" stroke="#1b74c8" stroke-width="1.500"/></svg>
    <svg width="16" height="16"><path d="M0 2h16v12H0z" fill="#1b74c8"/><path d="M2 5h12M2 8h12M4 11h8" stroke="#fff" stroke-dasharray="2 1"/></svg>
    <svg width="16" height="16"><circle cx="6" cy="4" r="3.500" fill="#b4c0d2"/><path d="M0 14c0-8 12-8 12 0z" fill="#b4c0d2"/><text x="7" y="15" class="badge">15</text></svg>
    <svg width="16" height="16"><path d="M5 2c1 2 5 2 6 0l4 2-1 4-2-1v8H4V7L2 8 1 4z" fill="#1b74c8"/></svg>
    <svg width="16" height="16"><path d="M1 13l7-7c-1-3 2-6 5-5l-3 3 2 2 3-3c1 3-2 6-5 5l-7 7z" fill="#1b74c8"/></svg>
</div>
</body>
</html>
```

FILE: styles.css
```css
* {
    box-sizing: border-box;
}

body {
    margin: 0;
    height: 100vh;
    display: flex;
    flex-direction: column;
    overflow: hidden;
    background: #f0f0f0;
    color: #000;
    font-family: "Open Sans", "Noto Sans CJK SC", sans-serif;
    font-size: 12px;
    line-height: 16px;
}

button, input, select {
    font: inherit;
    color: inherit;
    border: none;
    padding: 0;
    margin: 0;
    background: none;
}

a {
    color: inherit;
    text-decoration: none;
}

ul {
    list-style: none;
    margin: 0;
    padding: 0;
}

svg {
    flex: none;
}

.defs {
    display: none;
}

.ic {
    width: 16px;
    height: 16px;
    display: block;
}

/* title */
.titlebar {
    height: 24px;
    flex: none;
    display: flex;
    align-items: center;
    gap: 4px;
    padding: 0 2px;
    background: #fff;
}

.title {
    flex: 1;
    font-family: "Noto Sans", "Noto Sans CJK SC", sans-serif;
    white-space: nowrap;
}

.winbtns {
    display: flex;
}

.winbtns button {
    width: 46px;
    height: 22px;
}

/* menu */
.menubar {
    height: 28px;
    flex: none;
    display: flex;
    align-items: center;
    white-space: nowrap;
}

.menus {
    display: flex;
    gap: 11px;
    padding: 0 10px 0 7px;
    font-family: "Noto Sans", "Noto Sans CJK SC", sans-serif;
}

.tip {
    flex: 1;
    height: 100%;
    padding-left: 33px;
    line-height: 28px;
    color: #0f7070;
    background: #f6f6f6;
}

.account {
    width: 239px;
    height: 100%;
    display: flex;
    align-items: center;
    background: linear-gradient(#fbfbfb, #f0f0f0);
}

/* toolbars */
.toolbar {
    flex: none;
    display: flex;
    gap: 2px;
    padding: 2px 0;
}

.seg {
    height: 28px;
    display: flex;
    align-items: center;
    background: linear-gradient(#fcfcfc, #f1f1f1);
    border-radius: 2px;
    white-space: nowrap;
}

.files {
    width: 151px;
    padding-left: 1px;
}

.calc {
    width: 548px;
    padding-left: 1px;
}

.views {
    flex: 1;
}

.white {
    display: flex;
    align-items: center;
    background: #fff;
    height: 24px;
    margin-right: 2px;
}

.tb {
    height: 24px;
    display: flex;
    align-items: center;
    gap: 4px;
    padding: 0 4px 0 3px;
    white-space: nowrap;
}

.tb.on {
    background: #dfecf7;
    outline: 1px solid #1580d8;
    outline-offset: -1px;
}

.tb.off {
    color: #909090;
}

.caret {
    width: 12px;
    display: flex;
    justify-content: center;
}

.caret::before, .combo::after {
    content: "";
    border: 3px solid transparent;
    border-top-color: #000;
    border-bottom: none;
}

.caret.tight {
    width: 9px;
}

.caret.dim::before {
    border-top-color: #808080;
}

.sep {
    width: 1px;
    height: 20px;
    margin: 0 2px 0 3px;
    background: #bdbdbd;
}

.more {
    margin-left: auto;
    margin-right: 4px;
    align-self: flex-start;
    font-size: 16px;
    line-height: 14px;
}

.dots {
    width: 7px;
    height: 16px;
    background: repeating-linear-gradient(#b8b8b8 0 2px, transparent 2px 4px) 3px 1px / 2px 15px no-repeat;
}

.combo {
    width: 70px;
    height: 24px;
    margin-right: 2px;
    display: flex;
    align-items: center;
    background: linear-gradient(90deg, #fff calc(100% - 11px), #f4f4f4 0);
}

.combo.short {
    width: 58px;
}

.combo::after {
    margin: 0 3px 0 2px;
}

.combo select {
    appearance: none;
    flex: 1;
    min-width: 0;
    padding-left: 2px;
}

/* main */
main {
    flex: 1;
    min-height: 0;
    display: flex;
    gap: 5px;
}

aside {
    width: 180px;
    display: flex;
    flex-direction: column;
    font-family: "Liberation Serif", "Noto Sans CJK SC", serif;
}

.navhead {
    height: 16px;
    flex: none;
    display: flex;
    align-items: center;
    gap: 9px;
    padding-right: 3px;
    margin-bottom: 1px;
    color: #fff;
    background: #0054e3;
}

.navhead span {
    flex: 1;
}

.navbtn {
    height: 22px;
    flex: none;
    border: 1px solid #a0a0a0;
    border-top-color: #fff;
    background: #f0f0f0;
}

.expand {
    height: 27px;
    flex: none;
    padding: 4px 5px;
    border: 1px solid #a0a0a0;
    border-bottom: none;
    background: linear-gradient(#fff, #ededed);
}

.treebox {
    flex: 1;
    min-height: 0;
    display: flex;
    padding: 1px 3px 0 0;
    margin-bottom: 2px;
    border: 1px solid #808080;
    border-left-width: 2px;
    background: #fff;
}

.tree {
    flex: 1;
    min-width: 0;
    overflow: hidden;
}

.tree ul {
    margin-left: 13px;
    padding-left: 18px;
    border-left: 1px dotted #808080;
}

.tree ul li {
    height: 16px;
    display: flex;
    align-items: center;
    border-left: 1px dotted #808080;
    white-space: nowrap;
}

.tree ul li::before {
    content: "";
    width: 10px;
    flex: none;
    border-top: 1px dotted #808080;
}

.tree ul .ic {
    margin-right: 5px;
}

.tree ul .card {
    margin: 0 1px;
}

.sel .ic {
    background: #d9d9d9;
}

.sel span {
    background: #d9d9d9;
    padding: 0 3px 0 5px;
    margin-left: -5px;
}

.node {
    height: 16px;
    display: flex;
    align-items: center;
    gap: 5px;
    padding-left: 10px;
}

.node::before {
    content: "";
    width: 5px;
    height: 5px;
    margin: -4px 2px 0 0;
    border: solid #404040;
    border-width: 0 2px 2px 0;
    transform: rotate(45deg);
}

.node.shut::before {
    margin-top: 0;
    border-color: #a6a6a6;
    transform: rotate(-45deg);
}

.new {
    font: 9px/9px "Liberation Sans", sans-serif;
    margin-bottom: 5px;
    background: #ffd800;
}

.scroll {
    width: 15px;
    display: flex;
    flex-direction: column;
    background: #f0f0f0;
}

.thumb {
    flex: 1;
    margin: 142px 0 29px;
    background: #cdcdcd;
}

.work {
    flex: 1;
    min-width: 0;
    display: flex;
    flex-direction: column;
}

.row {
    height: 28px;
    flex: none;
    display: flex;
    align-items: center;
    padding-left: 1px;
}

.work .row:first-child {
    height: 26px;
}

.work .row:first-child .seg {
    height: 26px;
}

.axis {
    margin-left: 75px;
}

.stub {
    width: 31px;
    height: 24px;
    margin-left: 412px;
}

.draw {
    margin-left: 10px;
    padding-right: 2px;
}

.view {
    flex: 1;
    min-height: 0;
    width: 100%;
    background: #000;
}

.mark {
    font: 14px "Liberation Mono", monospace;
    fill: #fff;
}

.axis-label {
    font: 12px "Liberation Sans", sans-serif;
}

.snap {
    height: 31px;
    gap: 3px;
    padding-bottom: 2px;
}

.offset {
    color: #707070;
    gap: 2px;
    padding-right: 6px;
}

.offset .combo, .offset .rot {
    color: #000;
}

.second {
    margin-left: 4px;
}

.rot {
    margin: 0 4px 0 6px;
}

.offset .sep {
    margin: 0;
}

.offset input[type="checkbox"] {
    appearance: none;
    width: 12px;
    height: 12px;
    margin-left: 2px;
    border: 1px solid #999;
}

.spin {
    width: 58px;
    height: 22px;
    display: flex;
    align-items: center;
    border: 1px solid #7a7a7a;
}

.spin input {
    flex: 1;
    min-width: 0;
    text-align: right;
}

.spin::after {
    content: "";
    width: 6px;
    height: 16px;
    margin: 0 3px 0 8px;
    background:
        conic-gradient(from 150deg at 50% 0, #606060 60deg, transparent 0) top / 6px 4px no-repeat,
        conic-gradient(from -30deg at 50% 100%, #606060 60deg, transparent 0) bottom / 6px 4px no-repeat;
}

.wide {
    width: 68px;
}

/* status */
.status {
    height: 22px;
    flex: none;
    display: flex;
    gap: 2px;
    padding-top: 2px;
    background: #fff;
}

.status > span {
    border: 1px solid #d4d4d4;
    background: #f5f5f5;
    line-height: 18px;
    white-space: nowrap;
}

.status .num {
    font-family: "Liberation Mono", monospace;
    font-size: 10px;
}

.xy {
    width: 148px;
}

.floor {
    width: 78px;
}

.bottom {
    width: 98px;
}

.count {
    width: 48px;
}

.rest {
    flex: 1;
}

.fps {
    width: 71px;
}

/* taskbar */
.taskbar {
    height: 40px;
    flex: none;
    display: flex;
    background: #020b0e;
    color: #fff;
}

.start {
    width: 48px;
    display: flex;
    align-items: center;
    justify-content: center;
    background: #000;
}

.search {
    width: 344px;
    display: flex;
    align-items: center;
    gap: 6px;
    padding: 0 14px 0 8px;
    background: #333;
    font-size: 14px;
}

.search input {
    flex: 1;
    min-width: 0;
}

.search input::placeholder {
    color: #999;
    opacity: 1;
}

.apps {
    display: flex;
    flex: 1;
    gap: 1px;
    padding-left: 1px;
}

.apps button {
    width: 49px;
    display: flex;
    align-items: center;
    justify-content: center;
}

.apps .run {
    background: linear-gradient(#76b9ed, #76b9ed) bottom / 40px 3px no-repeat;
}

.apps .active {
    background: linear-gradient(#76b9ed, #76b9ed) bottom / 100% 3px no-repeat #363e40;
}

.cpu, .clock {
    text-align: center;
    line-height: 18px;
    padding-top: 2px;
}

.tray {
    display: flex;
    align-items: center;
    gap: 9px;
    margin: 0 17px 0 20px;
}

.ime {
    font-size: 14px;
}

.notice {
    width: 57px;
    padding-right: 3px;
    margin-right: 4px;
    border-right: 1px solid #555;
    display: flex;
    align-items: center;
    justify-content: center;
}

/* speed ball */
.ball {
    position: absolute;
    left: 41px;
    top: 3px;
    width: 127px;
    height: 50px;
}

.pill {
    position: absolute;
    left: 20px;
    right: 0;
    top: 7px;
    height: 38px;
    padding: 3px 29px 0 32px;
    display: grid;
    grid-template-columns: 1fr auto;
    border-radius: 19px;
    background: linear-gradient(#f4f4f4, #d4d4d4);
    box-shadow: 0 1px 3px rgba(0, 0, 0, 0.5);
    font-size: 10px;
}

.up {
    color: #e2562f;
}

.down {
    color: #189048;
}

.up, .down {
    font-size: 13px;
    font-weight: bold;
}

.circle {
    position: absolute;
    left: 1px;
    top: 0;
    width: 48px;
    height: 48px;
    border: 2px solid #eee;
    border-radius: 50%;
    background: linear-gradient(#2f8f5a 20%, #44d05c 24%);
    box-shadow: 0 0 3px rgba(0, 0, 0, 0.7);
    color: #fff;
    font: 14px/44px "Liberation Sans", sans-serif;
    text-align: center;
}

.plus {
    position: absolute;
    right: 3px;
    top: 14px;
}

/* ime bar */
.imebar {
    position: absolute;
    left: 884px;
    top: 3px;
    width: 167px;
    height: 24px;
    display: flex;
    align-items: center;
    gap: 6px;
    padding-left: 15px;
    border: 1px solid #a9c4e2;
    background: #fff;
    color: #1b74c8;
    font-size: 14px;
}

.logo {
    position: absolute;
    left: -19px;
    top: -3px;
}

.badge {
    font: bold 8px "Liberation Sans", sans-serif;
    fill: #8494ac;
}
```
